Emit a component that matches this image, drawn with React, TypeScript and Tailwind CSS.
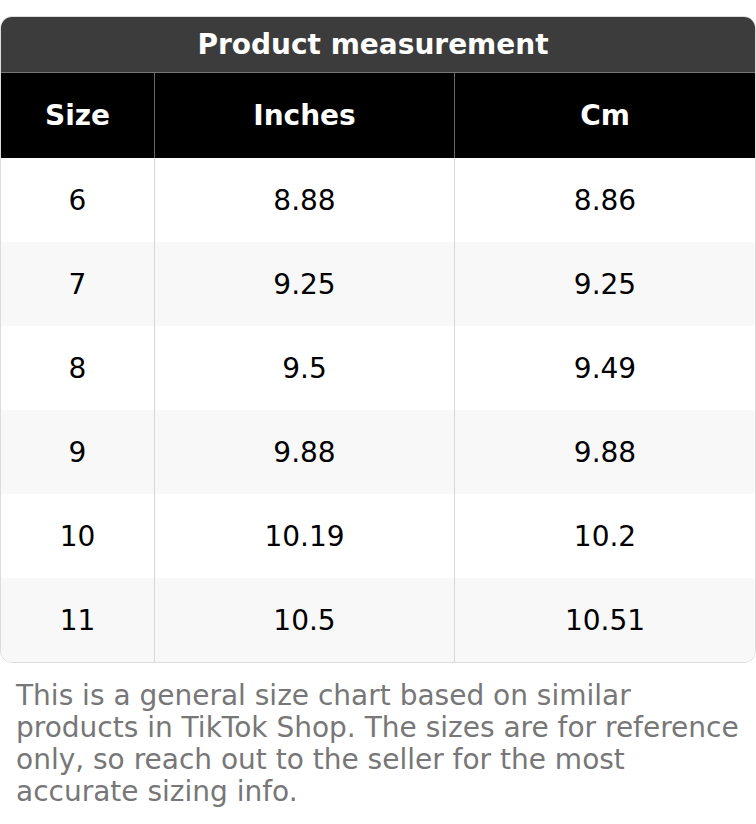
import React from "react";

const rows = [
  ["6", "8.88", "8.86"],
  ["7", "9.25", "9.25"],
  ["8", "9.5", "9.49"],
  ["9", "9.88", "9.88"],
  ["10", "10.19", "10.2"],
  ["11", "10.5", "10.51"],
];

export default function App() {
  return (
    <div className="w-[756px] bg-white pt-[16px]" style={{ fontFamily: '"DejaVu Sans", sans-serif' }}>
      <div className="rounded-[12px] border border-[#dcdcdc] overflow-hidden">
        <div className="h-[56px] bg-[#3c3c3c] flex items-center justify-center pr-[10px] text-white font-bold text-[28px] border-b border-[#777]">
          Product measurement
        </div>
        <div className="flex h-[85px] bg-black text-white font-bold text-[28px]">
          <div className="w-[154px] border-r border-[#666] flex items-center justify-center">Size</div>
          <div className="w-[300px] border-r border-[#666] flex items-center justify-center">Inches</div>
          <div className="flex-1 flex items-center justify-center">Cm</div>
        </div>
        {rows.map((r, i) => (
          <div key={i} className={`flex h-[84px] text-[28px] text-black ${i % 2 === 1 ? "bg-[#f8f8f8]" : "bg-white"}`}>
            <div className="w-[154px] pt-[2px] border-r border-[#d8d8d8] flex items-center justify-center">{r[0]}</div>
            <div className="w-[300px] pt-[2px] border-r border-[#d8d8d8] flex items-center justify-center">{r[1]}</div>
            <div className="flex-1 pt-[2px] flex items-center justify-center">{r[2]}</div>
          </div>
        ))}
      </div>
      <p className="mt-[17px] px-[16px] text-[28px] leading-[32px] text-[#777]">
        This is a general size chart based on similar products in TikTok Shop. The sizes are for reference only, so reach out to the seller for the most accurate sizing info.
      </p>
    </div>
  );
}
